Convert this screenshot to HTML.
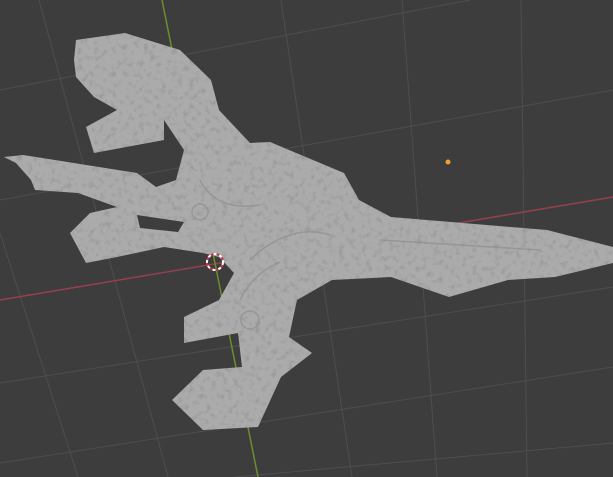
<!DOCTYPE html>
<html><head><meta charset="utf-8"><style>
html,body{margin:0;padding:0;background:#3d3d3d;width:613px;height:477px;overflow:hidden}
svg{display:block}
</style></head><body>
<svg width="613" height="477" viewBox="0 0 613 477" xmlns="http://www.w3.org/2000/svg">
<defs>
<filter id="tex" x="0" y="0" width="100%" height="100%">
<feTurbulence type="fractalNoise" baseFrequency="0.18" numOctaves="2" seed="3" result="n"/>
<feColorMatrix in="n" type="matrix" values="0 0 0 0 0  0 0 0 0 0  0 0 0 0 0  0 0 0 0.6 -0.3" result="a"/>
<feComposite in="a" in2="SourceGraphic" operator="in" result="d"/>
<feMerge><feMergeNode in="SourceGraphic"/><feMergeNode in="d"/></feMerge>
</filter>
</defs>
<rect width="613" height="477" fill="#3d3d3d"/>
<g stroke="#4e4e4e" stroke-width="1" fill="none">
<line x1="0" y1="90" x2="470" y2="0"/>
<line x1="0" y1="200" x2="613" y2="90"/>
<line x1="0" y1="383" x2="613" y2="287"/>
<line x1="0" y1="463" x2="613" y2="367"/>
<line x1="235" y1="477" x2="613" y2="443"/>
<line x1="39" y1="0" x2="168" y2="477"/>
<line x1="0" y1="233" x2="78" y2="477"/>
<line x1="281" y1="0" x2="352" y2="477"/>
<line x1="402" y1="0" x2="437" y2="477"/>
<line x1="521" y1="0" x2="527" y2="477"/>
</g>
<line x1="0" y1="300" x2="613" y2="197" stroke="#94414c" stroke-width="1.5"/>
<line x1="162" y1="0" x2="258" y2="477" stroke="#6b8f2c" stroke-width="1.5"/>
<g filter="url(#tex)">
<polygon fill="#ababab" points="76,40 125,33 180,50 211,80 219,110 250,143 270,142 344,173 359,200 391,217 547,230 613,247 613,263 555,277 508,280 449,297 391,277 332,280 297,300 289,337 312,353 281,377 258,427 203,430 172,400 203,370 242,367 238,333 184,343 184,317 219,300 234,273 219,257 203,253 164,247 117,257 86,263 70,233 90,213 117,207 78,193 35,190 31,180 16,163 4,157 23,155 55,160 137,173 156,187 176,180 184,150 164,120 164,140 94,153 86,127 117,110 94,97 76,77 74,60"/>
</g>
<polygon fill="#3d3d3d" points="137,215 184,222 178,232 140,228"/>
<g fill="none" stroke="#8e8e8e" stroke-width="1.5" opacity="0.7">
<path d="M250,260 C270,240 300,225 330,235"/>
<path d="M240,300 C250,280 262,270 280,262"/>
<path d="M380,240 L540,250"/>
<path d="M200,180 C210,200 230,210 260,205"/>
<circle cx="200" cy="212" r="8"/>
<circle cx="250" cy="320" r="9"/>
</g>
<circle cx="215" cy="262" r="8" fill="none" stroke="#c0394a" stroke-width="2"/>
<circle cx="215" cy="262" r="8" fill="none" stroke="#fff" stroke-width="2" stroke-dasharray="3 3"/>
<circle cx="448" cy="162" r="2.5" fill="#f0a030"/>
</svg>
</body></html>
